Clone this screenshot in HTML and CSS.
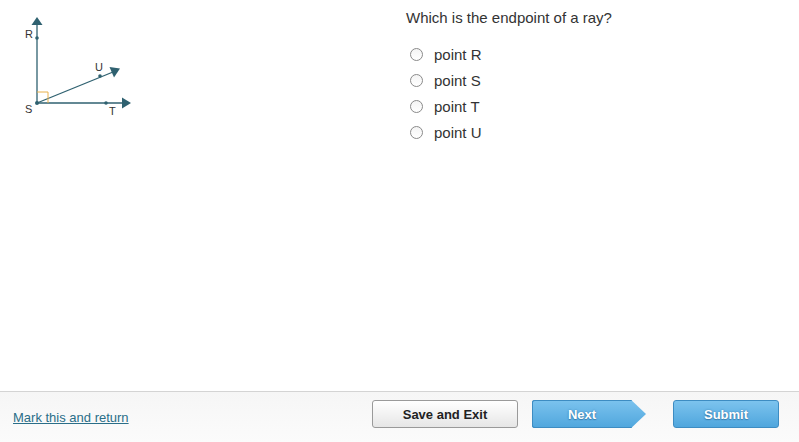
FILE: index.html
```html
<!DOCTYPE html>
<html>
<head>
<meta charset="utf-8">
<link rel="stylesheet" href="styles.css">
</head>
<body>
<div class="page">
  <main class="main">
    <div class="figure">
      <svg width="150" height="120" viewBox="0 0 150 120" xmlns="http://www.w3.org/2000/svg">
        <g stroke="#2f6170" stroke-width="1.3" fill="none">
          <line x1="37" y1="103" x2="37" y2="24"/>
          <line x1="37" y1="103" x2="124" y2="103"/>
          <line x1="37" y1="103" x2="113" y2="72"/>
        </g>
        <polyline points="37,92 48,92 48,103" fill="none" stroke="#e8b04a" stroke-width="1"/>
        <g fill="#2f6170">
          <polygon points="37,17 31.5,25 42.5,25"/>
          <polygon points="131,103 122,97.5 122,108.5"/>
          <polygon points="120,68.5 109.5,67 114,77.5"/>
          <circle cx="37" cy="38" r="1.8"/>
          <circle cx="37" cy="103" r="2"/>
          <circle cx="106" cy="103" r="1.8"/>
          <circle cx="100" cy="76" r="1.8"/>
        </g>
        <g font-family="Liberation Sans, Arial, sans-serif" font-size="11" fill="#333">
          <text x="25" y="38">R</text>
          <text x="25" y="113">S</text>
          <text x="109" y="115">T</text>
          <text x="95" y="71">U</text>
        </g>
      </svg>
    </div>
    <div class="question">
      <p class="prompt">Which is the endpoint of a ray?</p>
      <ul class="options">
        <li class="option"><span class="radio"></span><span>point R</span></li>
        <li class="option"><span class="radio"></span><span>point S</span></li>
        <li class="option"><span class="radio"></span><span>point T</span></li>
        <li class="option"><span class="radio"></span><span>point U</span></li>
      </ul>
    </div>
  </main>
  <footer class="footer">
    <a class="mark" href="#">Mark this and return</a>
    <div class="buttons">
      <button class="btn btn-save">Save and Exit</button>
      <button class="btn btn-blue btn-next">Next</button>
      <button class="btn btn-blue btn-submit">Submit</button>
    </div>
  </footer>
</div>
</body>
</html>
```

FILE: styles.css
```css
* { box-sizing: border-box; }
html, body {
  margin: 0;
  padding: 0;
  background: #fff;
  font-family: "Liberation Sans", Arial, sans-serif;
  color: #333;
}
.page {
  width: 799px;
  height: 442px;
  display: flex;
  flex-direction: column;
}
.main {
  height: 391px;
  display: grid;
  grid-template-columns: 406px 1fr;
}
.figure svg { display: block; }
.question {
  padding-top: 9px;
}
.prompt {
  margin: 0;
  font-size: 15px;
  line-height: 18px;
  color: #333;
}
.options {
  list-style: none;
  margin: 14px 0 0 0;
  padding: 0;
}
.option {
  display: flex;
  align-items: center;
  height: 26px;
  font-size: 15px;
  color: #333;
}
.radio {
  width: 13px;
  height: 13px;
  border: 1px solid #8a8a8a;
  border-radius: 50%;
  background: linear-gradient(#f4f4f4, #fff);
  margin: 0 11px 0 4px;
  flex: none;
}
.footer {
  flex: 1;
  border-top: 1px solid #d4d4d4;
  background: linear-gradient(#f6f6f6, #fbfbfb);
  display: flex;
  align-items: center;
  justify-content: space-between;
  padding: 0 20px 0 13px;
}
.mark {
  font-size: 13px;
  color: #2a6e88;
  text-decoration: underline;
  margin-top: 1px;
}
.buttons {
  display: flex;
  align-items: center;
  gap: 14px;
  padding-bottom: 6px;
}
.btn {
  height: 28px;
  font-family: "Liberation Sans", Arial, sans-serif;
  font-weight: bold;
  font-size: 13px;
  border-radius: 3px;
  padding: 0;
  cursor: pointer;
}
.btn-save {
  width: 146px;
  color: #222;
  background: linear-gradient(#ffffff, #e6e6e6);
  border: 1px solid #9a9a9a;
}
.btn-blue {
  color: #fff;
  text-shadow: 0 0 2px #3a7fb0, 0 1px 1px #3a7fb0;
  background: linear-gradient(#7cc3ee, #4fa6dd);
  border: 1px solid #3d8cc2;
}
.btn-next {
  width: 114px;
  border: none;
  border-radius: 3px 0 0 3px;
  clip-path: polygon(0 0, 87% 0, 100% 50%, 87% 100%, 0 100%);
  background: linear-gradient(#7cc3ee, #4fa6dd);
  padding-right: 14px;
  box-shadow: inset 1px 0 0 #3d8cc2, inset 0 1px 0 #3d8cc2, inset 0 -1px 0 #3d8cc2;
}
.btn-submit {
  width: 106px;
  margin-left: 13px;
}
```
